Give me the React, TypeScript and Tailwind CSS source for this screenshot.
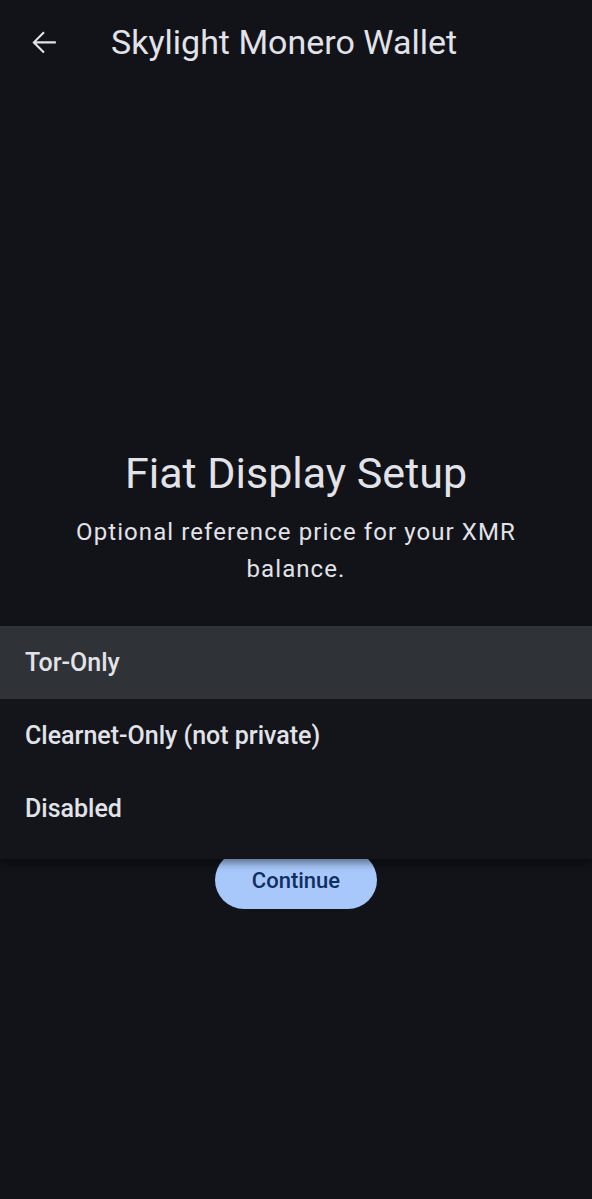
const options = ["Tor-Only", "Clearnet-Only (not private)", "Disabled"];

function BackArrow() {
  return (
    <svg width="37" height="37" viewBox="0 0 24 24" fill="currentColor" className="text-[#e2e2e9]">
      <path d="M20 11.2H7.4l5.4-5.4-1-1L4.8 12l7 7 1-1-5.4-5.4H20z" />
    </svg>
  );
}

export default function App() {
  return (
    <div
      className="relative w-[592px] h-[1199px] overflow-hidden bg-[#111318] text-[#e2e2e9]"
      style={{ fontFamily: "Roboto, 'Noto Sans', sans-serif" }}
    >
      <header className="flex items-center h-[84px] pl-[25px]">
        <BackArrow />
        <h1 className="ml-[49px] text-[34px] leading-none">Skylight Monero Wallet</h1>
      </header>

      <main className="flex flex-col items-center pt-[362px] px-[40px]">
        <h2 className="text-[43px] leading-[54px]">Fiat Display Setup</h2>
        <p className="mt-[14px] text-center text-[24px] leading-[37px] tracking-[0.045em] text-[#e2e2e9]">
          Optional reference price for your XMR balance.
        </p>
        <div className="h-[56px] w-full mt-[16px]" />
        <button className="mt-[191px] h-[58px] w-[162px] rounded-full bg-[#a8c8fb] text-[22px] font-medium text-[#0f2f5f]">
          Continue
        </button>
      </main>

      <div className="absolute left-0 top-[626px] w-[592px] pb-[14px] bg-[#13151a] shadow-[0_4px_8px_rgba(0,0,0,0.45)]">
        {options.map((o, i) => (
          <div
            key={o}
            className={`flex items-center h-[73px] px-[25px] text-[25px] font-medium ${
              i === 0 ? "bg-[#2f3236]" : ""
            }`}
          >
            {o}
          </div>
        ))}
      </div>
    </div>
  );
}
